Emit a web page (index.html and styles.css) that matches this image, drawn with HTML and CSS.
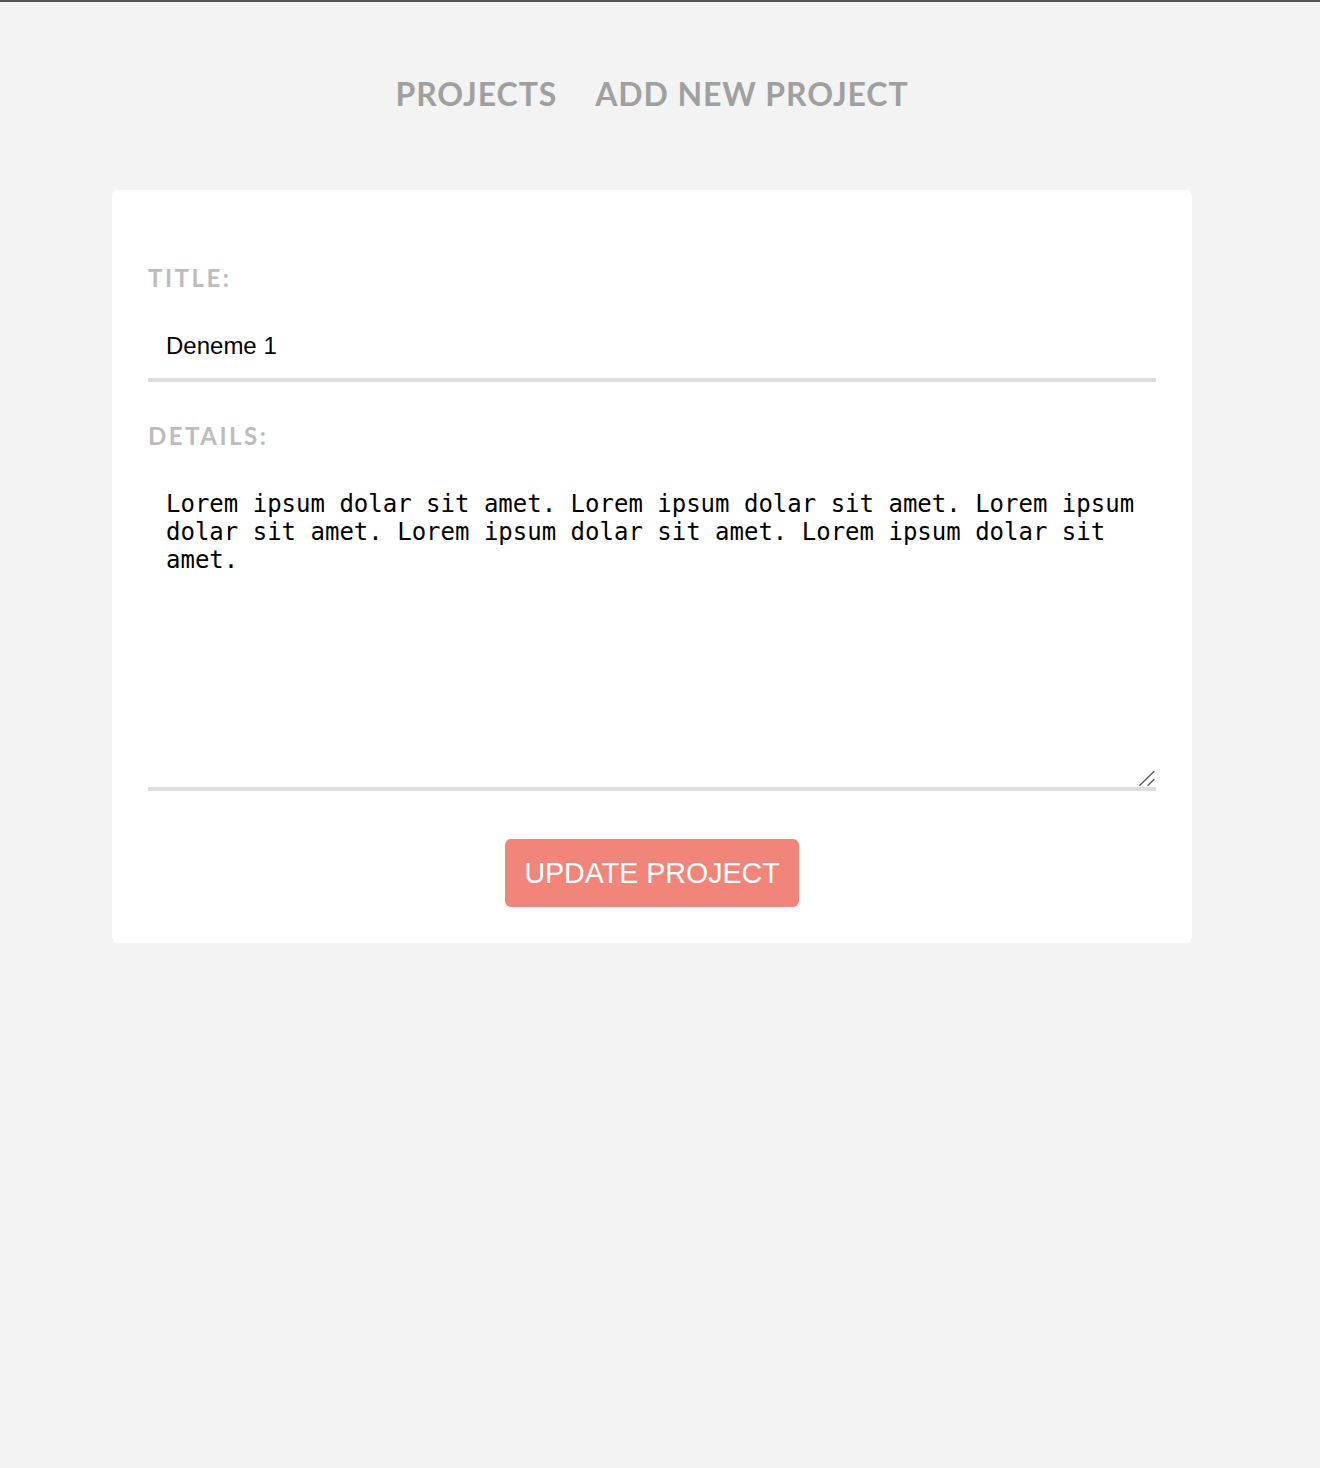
FILE: index.html
```html
<!DOCTYPE html>
<html lang="en">
<head>
<meta charset="utf-8">
<title>Edit Project</title>
<link rel="stylesheet" href="styles.css">
</head>
<body>
<div class="page">
  <nav class="nav">
    <a class="nav-link" href="#">PROJECTS</a>
    <a class="nav-link" href="#">ADD NEW PROJECT</a>
  </nav>
  <form class="card">
    <label class="field-label first" for="title">TITLE:</label>
    <input class="field-input" id="title" type="text" value="Deneme 1">
    <label class="field-label" for="details">DETAILS:</label>
    <div class="textarea-wrap">
      <textarea class="field-textarea" id="details" rows="10">Lorem ipsum dolar sit amet. Lorem ipsum dolar sit amet. Lorem ipsum dolar sit amet. Lorem ipsum dolar sit amet. Lorem ipsum dolar sit amet.</textarea>
      <svg class="grip" width="16" height="16" viewBox="0 0 16 16" aria-hidden="true">
        <line x1="0.8" y1="15.2" x2="15" y2="1.5" stroke="#5a5a5a" stroke-width="1.4" stroke-linecap="round"/>
        <line x1="9" y1="15.2" x2="15" y2="9.5" stroke="#5a5a5a" stroke-width="1.4" stroke-linecap="round"/>
      </svg>
    </div>
    <div class="actions">
      <button class="btn" type="button">UPDATE PROJECT</button>
    </div>
  </form>
</div>
</body>
</html>
```
FILE: styles.css
```css
* { box-sizing: border-box; }

html, body {
  margin: 0;
  background: #f3f3f3;
}

body {
  border-top: 2px solid #555555;
  padding-right: 16px;
  min-height: 1468px;
}

.page {
  max-width: 1080px;
  margin: 0 auto;
}

.nav {
  display: flex;
  justify-content: center;
  gap: 38px;
  padding-top: 73px;
}

.nav-link {
  font-family: "Lato", "Open Sans", sans-serif;
  font-weight: 700;
  font-size: 32px;
  line-height: 38px;
  letter-spacing: 0.9px;
  color: #a0a0a0;
  text-decoration: none;
}

.card {
  margin-top: 77px;
  background: #ffffff;
  border-radius: 6px;
  padding: 36px;
  display: flex;
  flex-direction: column;
}

.field-label {
  display: block;
  font-family: "Lato", "Open Sans", sans-serif;
  font-weight: 700;
  font-size: 24px;
  line-height: 24px;
  letter-spacing: 2.5px;
  color: #bcbcbc;
  margin: 42px 0 24px;
}

.field-label.first {
  margin-top: 40px;
}

.field-input {
  display: block;
  width: 100%;
  border: none;
  border-bottom: 4px solid #dddddd;
  padding: 18px;
  font-family: "Liberation Sans", Arial, sans-serif;
  font-size: 24px;
  color: #000000;
  background: #ffffff;
  outline: none;
}

.textarea-wrap {
  position: relative;
}

.field-textarea {
  display: block;
  width: 100%;
  border: none;
  border-bottom: 4px solid #dddddd;
  padding: 18px 18px 17px;
  font-family: "DejaVu Sans Mono", monospace;
  font-size: 24px;
  line-height: 28px;
  color: #000000;
  background: #ffffff;
  outline: none;
  resize: none;
}

.grip {
  position: absolute;
  right: 1px;
  bottom: 5px;
  display: block;
}

.actions {
  display: flex;
  justify-content: center;
  margin-top: 48px;
}

.btn {
  font-family: "Liberation Sans", Arial, sans-serif;
  font-size: 28.6px;
  line-height: 32px;
  color: #ffffff;
  background: #f28579;
  border: none;
  border-radius: 6px;
  padding: 18px 19px;
  cursor: pointer;
}
```
